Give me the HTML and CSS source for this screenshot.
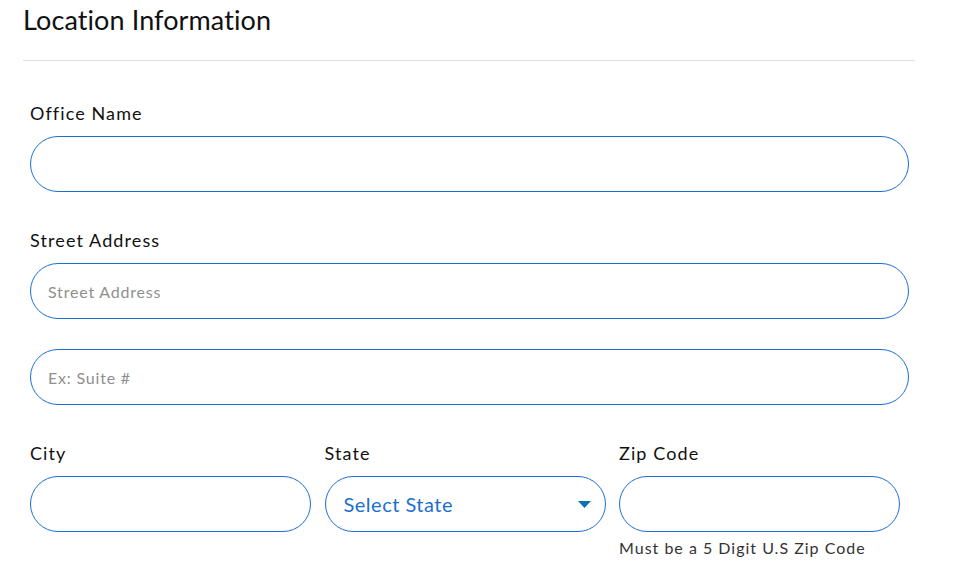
FILE: index.html
```html
<!DOCTYPE html>
<html lang="en">
<head>
<meta charset="utf-8">
<title>Location Information</title>
<link rel="stylesheet" href="styles.css">
</head>
<body>
<div class="page">
  <h2 class="title">Location Information</h2>
  <hr class="divider">
  <form class="form">
    <div class="group">
      <label class="label" for="office">Office Name</label>
      <input class="input" id="office" type="text">
    </div>
    <div class="group">
      <label class="label" for="street">Street Address</label>
      <input class="input" id="street" type="text" placeholder="Street Address">
      <input class="input input-second" type="text" placeholder="Ex: Suite #">
    </div>
    <div class="row">
      <div class="col">
        <label class="label" for="city">City</label>
        <input class="input" id="city" type="text">
      </div>
      <div class="col">
        <label class="label" for="state">State</label>
        <div class="select" id="state">
          <span class="select-text">Select State</span>
          <svg class="caret" width="13" height="7" viewBox="0 0 13 7"><path d="M0 0H13L6.5 7Z" fill="#0b72b5"/></svg>
        </div>
      </div>
      <div class="col">
        <label class="label" for="zip">Zip Code</label>
        <input class="input" id="zip" type="text">
        <div class="help">Must be a 5 Digit U.S Zip Code</div>
      </div>
    </div>
  </form>
</div>
</body>
</html>
```

FILE: styles.css
```css
* { box-sizing: border-box; }
html, body { margin: 0; padding: 0; background: #fff; }
body {
  font-family: "Lato", "Open Sans", sans-serif;
  color: #111;
}
.page {
  width: 915px;
  padding-left: 23px;
}
.title {
  margin: 0;
  padding-top: 3px;
  font-size: 27px;
  line-height: 34px;
  font-weight: 400;
  letter-spacing: 0.1px;
  color: #111;
}
.divider {
  margin: 23px 0 0 0;
  border: 0;
  border-top: 1px solid #dedede;
  height: 0;
}
.form {
  padding-left: 7px;
  padding-top: 40px;
}
.group {
  margin-bottom: 36px;
}
.label {
  display: block;
  font-size: 18px;
  line-height: 24px;
  letter-spacing: 1.1px;
  color: #111;
  margin-bottom: 11px;
}
.input {
  display: block;
  width: 879px;
  height: 56px;
  border: 1px solid #1a6fd4;
  border-radius: 28px;
  padding: 0 17px;
  font-family: inherit;
  font-size: 16px;
  letter-spacing: 0.8px;
  color: #111;
  background: #fff;
  outline: none;
}
.input::placeholder { color: #8f8f8f; }
.input-second { margin-top: 30px; }
.row {
  display: grid;
  grid-template-columns: 281px 281px 281px;
  column-gap: 13.5px;
}
.row .input { width: 281px; }
.row .label { margin-bottom: 11px; }
.select {
  height: 56px;
  border: 1px solid #1a6fd4;
  border-radius: 28px;
  padding: 0 14px 0 18px;
  display: flex;
  align-items: center;
  justify-content: space-between;
}
.select-text {
  font-size: 20px;
  letter-spacing: 0.5px;
  color: #1a6fcf;
}
.help {
  margin-top: 5px;
  font-size: 16px;
  line-height: 22px;
  letter-spacing: 1px;
  color: #333;
}
```
